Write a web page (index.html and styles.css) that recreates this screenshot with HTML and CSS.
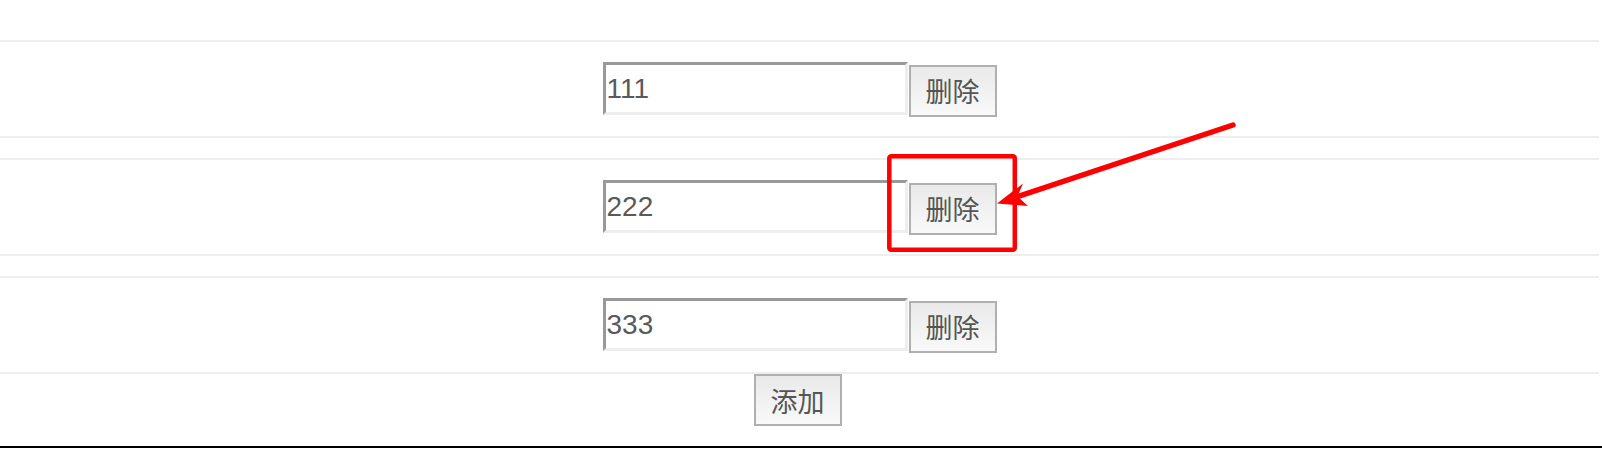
FILE: index.html
```html
<!DOCTYPE html>
<html lang="zh-CN">
<head>
<meta charset="utf-8">
<title>列表</title>
<link rel="stylesheet" href="styles.css">
</head>
<body>
<div class="page">
  <ul class="list">
    <li class="row"><input class="field" type="text" value="111"><button class="btn">删除</button></li>
    <li class="row"><input class="field" type="text" value="222"><button class="btn">删除</button></li>
    <li class="row"><input class="field" type="text" value="333"><button class="btn">删除</button></li>
  </ul>
  <div class="actions"><button class="btn">添加</button></div>
</div>
<svg class="annot" width="1602" height="450" viewBox="0 0 1602 450" aria-hidden="true">
  <rect x="889.3" y="156.3" width="125.5" height="93.5" rx="2" fill="none" stroke="#ff0000" stroke-width="4.5"/>
  <line x1="1233" y1="125" x2="1015" y2="197.5" stroke="#ff0000" stroke-width="5.5" stroke-linecap="round"/>
  <polygon points="997,203.5 1023,183.5 1017.5,196.5 1028,206" fill="#ff0000"/>
</svg>
</body>
</html>
```

FILE: styles.css
```css
html, body {
  margin: 0;
  padding: 0;
  background: #fff;
}

body {
  position: relative;
  width: 1602px;
  height: 450px;
  overflow: hidden;
  font-family: "Liberation Sans", Arial, "Noto Sans CJK SC", sans-serif;
}

.page {
  padding-top: 40px;
  padding-bottom: 20px;
  padding-right: 3px;
  border-bottom: 2px solid #000;
}

.list {
  list-style: none;
  margin: 0;
  padding: 0;
  display: flex;
  flex-direction: column;
  gap: 20px;
}

.row {
  height: 94px;
  border-top: 2px solid #eee;
  border-bottom: 2px solid #eee;
  display: flex;
  justify-content: center;
  align-items: center;
  gap: 1px;
}

.field {
  box-sizing: border-box;
  width: 305px;
  height: 53px;
  margin: 0 0 1px 0;
  padding: 0 0 0 1px;
  border-style: solid;
  border-width: 3px;
  border-color: #999 #eee #eee #999;
  background: #fff;
  color: #5a5a5a;
  font-family: "Liberation Sans", Arial, sans-serif;
  font-size: 28px;
  outline: none;
}

.btn {
  box-sizing: border-box;
  width: 88px;
  height: 52px;
  margin: 3px 0 0 0;
  padding: 0;
  border: 2px solid #b0b0b0;
  border-radius: 0;
  background: linear-gradient(#e9e9e9, #f9f9f9);
  color: #555;
  font-family: "Noto Sans CJK SC", "Liberation Sans", sans-serif;
  font-size: 27px;
  font-weight: 400;
  line-height: 1;
}

.actions {
  display: flex;
  justify-content: center;
  padding-right: 4px;
}

.actions .btn {
  margin: 0;
}

.annot {
  position: absolute;
  top: 0;
  left: 0;
  pointer-events: none;
}
```
